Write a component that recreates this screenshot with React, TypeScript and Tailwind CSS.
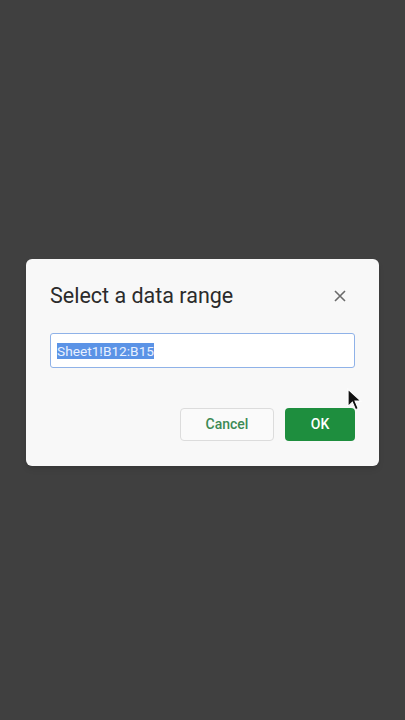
export default function App() {
  return (
    <div
      className="relative flex h-[720px] w-full items-center justify-center bg-[#404040] pt-[5px]"
      style={{ fontFamily: "Roboto, 'Liberation Sans', sans-serif" }}
    >
      <div className="w-[353px] rounded-[6px] bg-[#f8f8f8] px-6 pb-[25px] pt-[22px] shadow-md">
        <div className="flex items-center justify-between">
          <h2 className="text-[21.5px] leading-[30px] text-[#2b2b2b]">Select a data range</h2>
          <button className="mr-[8px] text-[#6b6b6b]">
            <svg width="14" height="14" viewBox="0 0 14 14" fill="none" stroke="currentColor" strokeWidth="1.6">
              <path d="M2 2L12 12M12 2L2 12" />
            </svg>
          </button>
        </div>
        <div className="mt-[22px] flex h-[35px] items-center rounded-[3px] border border-[#8fb2e8] bg-white px-[6px]">
          <span className="bg-[#5b93e6] text-[13.7px] leading-[16px] text-[#e8f0ff]">Sheet1!B12:B15</span>
        </div>
        <div className="mt-[40px] flex justify-end gap-[11px]">
          <button className="h-[33px] w-[94px] rounded-[4px] border border-[#dcdcdc] bg-[#fafafa] text-[14px] font-medium text-[#3c8a55]">
            Cancel
          </button>
          <button className="h-[33px] w-[70px] rounded-[4px] bg-[#1e8e3e] text-[14px] font-medium text-white">
            OK
          </button>
        </div>
      </div>
      <svg className="absolute left-[347px] top-[388px]" width="15" height="24" viewBox="0 0 14 22">
        <path d="M1 1L1 17L5 13L8 20L10.5 19L7.5 12L13 12Z" fill="#111" stroke="#fff" strokeWidth="1" />
      </svg>
    </div>
  );
}
